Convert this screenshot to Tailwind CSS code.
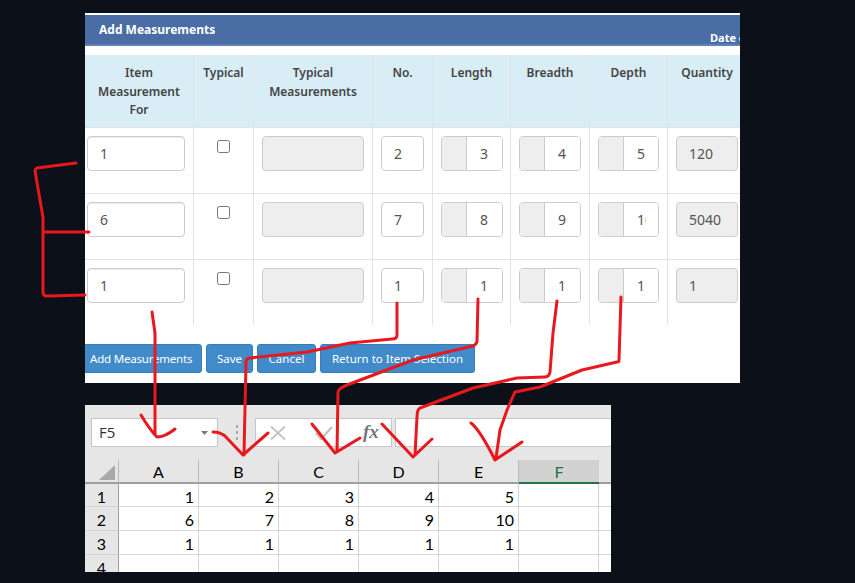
<!doctype html>
<html>
<head>
<meta charset="utf-8">
<script src="https://cdn.jsdelivr.net/npm/@tailwindcss/browser@4"></script>
</head>
<body class="m-0 bg-[#0c1018]">
<div class="relative w-[855px] h-[583px] overflow-hidden bg-[#0c1018] pt-[13px]">

  <!-- web form -->
  <section class="ml-[85px] w-[655px] h-[370px] bg-white overflow-hidden font-['Noto_Sans',sans-serif] pt-[2px]">
    <div class="relative h-[31px] bg-[#4a6da5] border-b-2 border-[#5f81b5] flex items-center pl-[14px] text-white font-bold text-[12px]">
      <span>Add Measurements</span>
      <span class="absolute left-[625px] top-[15px] w-[30px] overflow-hidden whitespace-nowrap text-[11px]">Date of</span>
    </div>

    <div class="mt-[9px] grid grid-cols-[109px_60px_119px_60px_78px_79px_78px_72px] grid-rows-[73px_66px_66px_65px] text-[#555] text-[14px]">
      <div class="bg-[#d9edf7] border-r border-b border-[#e0e4e6] pt-[9px] text-center text-[12px] leading-[18.5px] font-semibold text-[#444]">Item<br>Measurement<br>For</div>
      <div class="bg-[#d9edf7] border-r border-b border-[#e0e4e6] pt-[9px] text-center text-[12px] leading-[18.5px] font-semibold text-[#444]">Typical</div>
      <div class="bg-[#d9edf7] border-r border-b border-[#e0e4e6] pt-[9px] text-center text-[12px] leading-[18.5px] font-semibold text-[#444]">Typical<br>Measurements</div>
      <div class="bg-[#d9edf7] border-r border-b border-[#e0e4e6] pt-[9px] text-center text-[12px] leading-[18.5px] font-semibold text-[#444]">No.</div>
      <div class="bg-[#d9edf7] border-r border-b border-[#e0e4e6] pt-[9px] text-center text-[12px] leading-[18.5px] font-semibold text-[#444]">Length</div>
      <div class="bg-[#d9edf7] border-r border-b border-[#e0e4e6] pt-[9px] text-center text-[12px] leading-[18.5px] font-semibold text-[#444]">Breadth</div>
      <div class="bg-[#d9edf7] border-r border-b border-[#e0e4e6] pt-[9px] text-center text-[12px] leading-[18.5px] font-semibold text-[#444]">Depth</div>
      <div class="bg-[#d9edf7] border-b border-[#e0e4e6] pt-[9px] pl-[6px] text-center text-[12px] leading-[18.5px] font-semibold text-[#444]">Quantity</div>

      <!-- row 1 -->
      <div class="border-r border-b border-[#e3e3e3] pt-[8px] pl-[2px]"><input value="1" class="w-[98px] h-[35px] px-3 border border-[#ccc] rounded bg-white shadow-[inset_0_1px_1px_rgba(0,0,0,0.075)]"></div>
      <div class="border-r border-b border-[#e3e3e3] pt-[11px] flex justify-center items-start"><input type="checkbox" class="w-[13px] h-[13px] mt-[1px]"></div>
      <div class="border-r border-b border-[#e3e3e3] pt-[8px] pl-[8px]"><div class="w-[102px] h-[35px] border border-[#ccc] rounded bg-[#eee]"></div></div>
      <div class="border-r border-b border-[#e3e3e3] pt-[8px] pl-[8px]"><input value="2" class="w-[43px] h-[35px] px-3 border border-[#ccc] rounded bg-white"></div>
      <div class="border-r border-b border-[#e3e3e3] pt-[8px] pl-[8px]"><div class="flex w-[62px] h-[35px] border border-[#ccc] rounded overflow-hidden"><span class="w-[26px] bg-[#eee] border-r border-[#ccc]"></span><input value="3" class="w-[35px] pl-[13px] pr-3 bg-white"></div></div>
      <div class="border-r border-b border-[#e3e3e3] pt-[8px] pl-[8px]"><div class="flex w-[62px] h-[35px] border border-[#ccc] rounded overflow-hidden"><span class="w-[26px] bg-[#eee] border-r border-[#ccc]"></span><input value="4" class="w-[35px] pl-[13px] pr-3 bg-white"></div></div>
      <div class="border-r border-b border-[#e3e3e3] pt-[8px] pl-[8px]"><div class="flex w-[61px] h-[35px] border border-[#ccc] rounded overflow-hidden"><span class="w-[26px] bg-[#eee] border-r border-[#ccc]"></span><input value="5" class="w-[34px] pl-[13px] pr-3 bg-white"></div></div>
      <div class="border-b border-[#e3e3e3] pt-[8px] pl-[8px]"><div class="w-[62px] h-[35px] border border-[#ccc] rounded bg-[#eee] px-3 leading-[33px]">120</div></div>

      <!-- row 2 -->
      <div class="border-r border-b border-[#e3e3e3] pt-[8px] pl-[2px]"><input value="6" class="w-[98px] h-[35px] px-3 border border-[#ccc] rounded bg-white shadow-[inset_0_1px_1px_rgba(0,0,0,0.075)]"></div>
      <div class="border-r border-b border-[#e3e3e3] pt-[11px] flex justify-center items-start"><input type="checkbox" class="w-[13px] h-[13px] mt-[1px]"></div>
      <div class="border-r border-b border-[#e3e3e3] pt-[8px] pl-[8px]"><div class="w-[102px] h-[35px] border border-[#ccc] rounded bg-[#eee]"></div></div>
      <div class="border-r border-b border-[#e3e3e3] pt-[8px] pl-[8px]"><input value="7" class="w-[43px] h-[35px] px-3 border border-[#ccc] rounded bg-white"></div>
      <div class="border-r border-b border-[#e3e3e3] pt-[8px] pl-[8px]"><div class="flex w-[62px] h-[35px] border border-[#ccc] rounded overflow-hidden"><span class="w-[26px] bg-[#eee] border-r border-[#ccc]"></span><input value="8" class="w-[35px] pl-[13px] pr-3 bg-white"></div></div>
      <div class="border-r border-b border-[#e3e3e3] pt-[8px] pl-[8px]"><div class="flex w-[62px] h-[35px] border border-[#ccc] rounded overflow-hidden"><span class="w-[26px] bg-[#eee] border-r border-[#ccc]"></span><input value="9" class="w-[35px] pl-[13px] pr-3 bg-white"></div></div>
      <div class="border-r border-b border-[#e3e3e3] pt-[8px] pl-[8px]"><div class="flex w-[61px] h-[35px] border border-[#ccc] rounded overflow-hidden"><span class="w-[26px] bg-[#eee] border-r border-[#ccc]"></span><input value="10" class="w-[34px] pl-[13px] pr-3 bg-white"></div></div>
      <div class="border-b border-[#e3e3e3] pt-[8px] pl-[8px]"><div class="w-[62px] h-[35px] border border-[#ccc] rounded bg-[#eee] px-3 leading-[33px]">5040</div></div>

      <!-- row 3 -->
      <div class="border-r border-[#e3e3e3] pt-[8px] pl-[2px]"><input value="1" class="w-[98px] h-[35px] px-3 border border-[#ccc] rounded bg-white shadow-[inset_0_1px_1px_rgba(0,0,0,0.075)]"></div>
      <div class="border-r border-[#e3e3e3] pt-[11px] flex justify-center items-start"><input type="checkbox" class="w-[13px] h-[13px] mt-[1px]"></div>
      <div class="border-r border-[#e3e3e3] pt-[8px] pl-[8px]"><div class="w-[102px] h-[35px] border border-[#ccc] rounded bg-[#eee]"></div></div>
      <div class="border-r border-[#e3e3e3] pt-[8px] pl-[8px]"><input value="1" class="w-[43px] h-[35px] px-3 border border-[#ccc] rounded bg-white"></div>
      <div class="border-r border-[#e3e3e3] pt-[8px] pl-[8px]"><div class="flex w-[62px] h-[35px] border border-[#ccc] rounded overflow-hidden"><span class="w-[26px] bg-[#eee] border-r border-[#ccc]"></span><input value="1" class="w-[35px] pl-[13px] pr-3 bg-white"></div></div>
      <div class="border-r border-[#e3e3e3] pt-[8px] pl-[8px]"><div class="flex w-[62px] h-[35px] border border-[#ccc] rounded overflow-hidden"><span class="w-[26px] bg-[#eee] border-r border-[#ccc]"></span><input value="1" class="w-[35px] pl-[13px] pr-3 bg-white"></div></div>
      <div class="border-r border-[#e3e3e3] pt-[8px] pl-[8px]"><div class="flex w-[61px] h-[35px] border border-[#ccc] rounded overflow-hidden"><span class="w-[26px] bg-[#eee] border-r border-[#ccc]"></span><input value="1" class="w-[34px] pl-[13px] pr-3 bg-white"></div></div>
      <div class="pt-[8px] pl-[8px]"><div class="w-[62px] h-[35px] border border-[#ccc] rounded bg-[#eee] px-3 leading-[33px]">1</div></div>
    </div>

    <div class="mt-[19px] flex gap-[4px] text-white text-[11.5px] -ml-[4px]">
      <span class="h-[29px] w-[121px] pl-[8px] leading-[28px] bg-[#428bca] border border-[#357ebd] rounded-[3px] whitespace-nowrap tracking-[-0.2px]">Add Measurements</span>
      <span class="h-[29px] w-[47px] text-center leading-[28px] bg-[#428bca] border border-[#357ebd] rounded-[3px]">Save</span>
      <span class="h-[29px] w-[59px] text-center leading-[28px] bg-[#428bca] border border-[#357ebd] rounded-[3px]">Cancel</span>
      <span class="h-[29px] w-[155px] text-center leading-[28px] bg-[#428bca] border border-[#357ebd] rounded-[3px]">Return to Item Selection</span>
    </div>
  </section>

  <!-- spreadsheet -->
  <section class="mt-[22px] ml-[85px] w-[526px] h-[167px] overflow-hidden bg-white font-['Lato',sans-serif] text-black">
    <div class="h-[55px] bg-[#e6e6e6] pt-[13px] pl-[6px] flex items-start">
      <div class="w-[127px] h-[29px] bg-white border border-[#c6c6c6] flex items-center justify-between pl-[7px] pr-[9px] font-['Open_Sans',sans-serif] text-[15px] text-[#333]">
        <span>F5</span>
        <svg width="7" height="4" viewBox="0 0 7 4"><path d="M0 0h7L3.500 4z" fill="#777"/></svg>
      </div>
      <div class="w-[37px] h-[29px] flex flex-col items-center justify-center gap-[3px]">
        <span class="w-[2px] h-[3px] bg-[#a8a8a8]"></span>
        <span class="w-[2px] h-[3px] bg-[#a8a8a8]"></span>
        <span class="w-[2px] h-[3px] bg-[#a8a8a8]"></span>
      </div>
      <div class="w-[137px] h-[29px] bg-white border border-[#c6c6c6] flex items-center pl-[14px]">
        <svg width="16" height="14" viewBox="0 0 16 14" fill="none" stroke="#c4c4c4" stroke-width="2"><path d="M1 0.500L15 13.500M15 0.500L1 13.500"/></svg>
        <svg class="ml-[29px]" width="18" height="14" viewBox="0 0 18 14" fill="none" stroke="#c4c4c4" stroke-width="2.500"><path d="M1 7L6 13L17 1"/></svg>
        <span class="ml-[30px] -mt-[2px] font-['Liberation_Serif',serif] italic font-bold text-[19px] leading-[24px] text-[#777]">fx</span>
      </div>
      <div class="ml-[3px] w-[216px] h-[29px] bg-white border-y border-l border-[#c6c6c6]"></div>
    </div>

    <div class="grid grid-cols-[34px_80px_80px_80px_80px_80px_80px_12px] grid-rows-[24px_23px_24px_24px_17px] text-[16px] leading-[25px]">
      <div class="relative bg-[#e6e6e6] border-r border-b-2 border-r-[#b8b8b8] border-b-[#9f9f9f]">
        <svg class="absolute left-[14px] top-[5px]" width="16" height="15" viewBox="0 0 16 15"><path d="M16 0V15H0z" fill="#a9a9a9"/></svg>
      </div>
      <div class="bg-[#e6e6e6] border-r border-b-2 border-r-[#b8b8b8] border-b-[#9f9f9f] text-center leading-[23px]">A</div>
      <div class="bg-[#e6e6e6] border-r border-b-2 border-r-[#b8b8b8] border-b-[#9f9f9f] text-center leading-[23px]">B</div>
      <div class="bg-[#e6e6e6] border-r border-b-2 border-r-[#b8b8b8] border-b-[#9f9f9f] text-center leading-[23px]">C</div>
      <div class="bg-[#e6e6e6] border-r border-b-2 border-r-[#b8b8b8] border-b-[#9f9f9f] text-center leading-[23px]">D</div>
      <div class="bg-[#e6e6e6] border-r border-b-2 border-r-[#b8b8b8] border-b-[#9f9f9f] text-center leading-[23px]">E</div>
      <div class="bg-[#d2d2d2] border-b-2 border-b-[#217346] text-center text-[#217346] leading-[23px]">F</div>
      <div class="bg-[#e6e6e6] border-b-2 border-b-[#9f9f9f]"></div>

      <div class="bg-[#e6e6e6] border-r border-b border-r-[#9f9f9f] border-b-[#d4d4d4] text-center">1</div>
      <div class="border-r border-b border-[#d4d4d4] text-right pr-[4px]">1</div>
      <div class="border-r border-b border-[#d4d4d4] text-right pr-[4px]">2</div>
      <div class="border-r border-b border-[#d4d4d4] text-right pr-[4px]">3</div>
      <div class="border-r border-b border-[#d4d4d4] text-right pr-[4px]">4</div>
      <div class="border-r border-b border-[#d4d4d4] text-right pr-[4px]">5</div>
      <div class="border-r border-b border-[#d4d4d4]"></div>
      <div class="border-b border-[#d4d4d4]"></div>

      <div class="bg-[#e6e6e6] border-r border-b border-r-[#9f9f9f] border-b-[#d4d4d4] text-center">2</div>
      <div class="border-r border-b border-[#d4d4d4] text-right pr-[4px]">6</div>
      <div class="border-r border-b border-[#d4d4d4] text-right pr-[4px]">7</div>
      <div class="border-r border-b border-[#d4d4d4] text-right pr-[4px]">8</div>
      <div class="border-r border-b border-[#d4d4d4] text-right pr-[4px]">9</div>
      <div class="border-r border-b border-[#d4d4d4] text-right pr-[4px]">10</div>
      <div class="border-r border-b border-[#d4d4d4]"></div>
      <div class="border-b border-[#d4d4d4]"></div>

      <div class="bg-[#e6e6e6] border-r border-b border-r-[#9f9f9f] border-b-[#d4d4d4] text-center">3</div>
      <div class="border-r border-b border-[#d4d4d4] text-right pr-[4px]">1</div>
      <div class="border-r border-b border-[#d4d4d4] text-right pr-[4px]">1</div>
      <div class="border-r border-b border-[#d4d4d4] text-right pr-[4px]">1</div>
      <div class="border-r border-b border-[#d4d4d4] text-right pr-[4px]">1</div>
      <div class="border-r border-b border-[#d4d4d4] text-right pr-[4px]">1</div>
      <div class="border-r border-b border-[#d4d4d4]"></div>
      <div class="border-b border-[#d4d4d4]"></div>

      <div class="bg-[#e6e6e6] border-r border-r-[#9f9f9f] text-center">4</div>
      <div class="border-r border-[#d4d4d4]"></div>
      <div class="border-r border-[#d4d4d4]"></div>
      <div class="border-r border-[#d4d4d4]"></div>
      <div class="border-r border-[#d4d4d4]"></div>
      <div class="border-r border-[#d4d4d4]"></div>
      <div class="border-r border-[#d4d4d4]"></div>
      <div></div>
    </div>
  </section>

  <!-- hand-drawn annotations -->
  <svg class="absolute inset-0 pointer-events-none" width="855" height="583" viewBox="0 0 855 583" fill="none" stroke="#e8191e" stroke-width="3" stroke-linecap="round" stroke-linejoin="round">
    <path d="M76 163L37 168Q35 169 35 171L40 200L43 217V232M43 232H89M43 232V292Q43 296 47 296L85 295"/>
    <path d="M152 312L155 333V435M141 415Q150 430 157 437Q165 437 175 429"/>
    <path d="M397 303V335Q397 339 392 339L350 343L307 352L250 358Q246 358 246 362L244 455M213 432Q220 432 225 436L243 455L268 433"/>
    <path d="M478 299L477 341Q477 344 473 346L413 360L347 385Q339 388 338 392L337 452M312 424L335 453L360 438"/>
    <path d="M557 301L553 333L550 372Q549 377 545 377L517 378L473 388L420 408Q417 410 417 417L415 455M382 424L413 457L432 439"/>
    <path d="M621 297L619 360Q619 362 617 362L582 370L540 387L515 392L507 410L500 430L496 458M471 423Q480 430 495 460L522 442"/>
  </svg>
</div>
</body>
</html>
